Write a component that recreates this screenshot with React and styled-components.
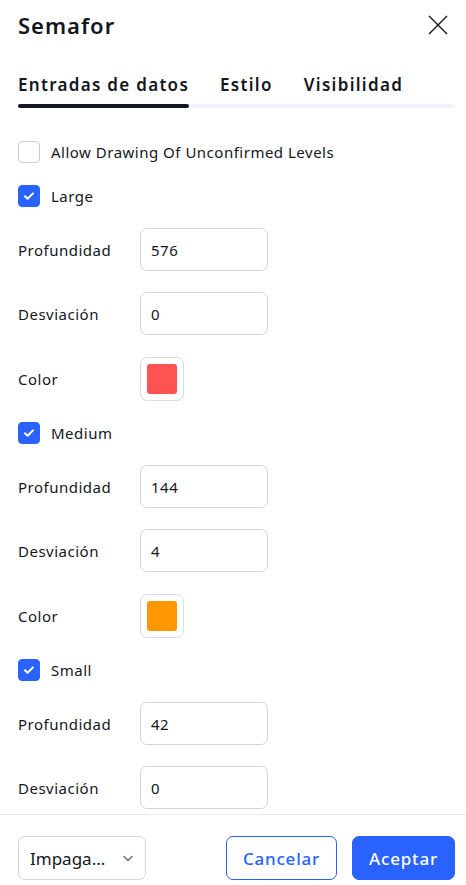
import styled, { createGlobalStyle } from "styled-components";

const GlobalStyle = createGlobalStyle`
    html, body {
        margin: 0;
        padding: 0;
        background: #ffffff;
    }
    * {
        box-sizing: border-box;
    }
`

const Dialog = styled.div`
    width: 466px;
    height: 885px;
    display: flex;
    flex-direction: column;
    background: #ffffff;
    color: #131722;
    font-family: "Noto Sans", "Open Sans", sans-serif;
    overflow: hidden;
`

const Header = styled.div`
    display: flex;
    align-items: center;
    justify-content: space-between;
    height: 50px;
    padding: 0 18px;

    h1 {
        margin: 0;
        font-size: 22px;
        font-weight: 600;
        letter-spacing: 1px;
    }
`

const CloseButton = styled.button`
    border: none;
    background: none;
    padding: 0;
    width: 24px;
    height: 24px;
    display: flex;
    align-items: center;
    justify-content: center;
    color: #131722;
    margin-right: -2px;
`

const Tabs = styled.div`
    display: flex;
    gap: 31px;
    margin: 23px 11px 0 18px;
    border-bottom: 4px solid #f0f3fa;
    border-radius: 2px;
`

const Tab = styled.div`
    position: relative;
    font-size: 17px;
    font-weight: 600;
    letter-spacing: 1.3px;
    padding-bottom: 8px;
    color: #131722;

    &::after {
        content: "";
        display: ${(p) => (p.active ? "block" : "none")};
        position: absolute;
        left: 0;
        right: 0;
        bottom: -4px;
        height: 4px;
        border-radius: 2px;
        background: #131722;
    }
`

const Content = styled.div`
    flex: 1;
    overflow: hidden;
    padding: 33px 18px 0 18px;
    display: flex;
    flex-direction: column;
    letter-spacing: 0.5px;
`

const CheckRow = styled.label`
    display: flex;
    align-items: center;
    gap: 11px;
    height: 22px;
    margin-bottom: ${(p) => p.gap}px;
    font-size: 15px;
`

const Box = styled.span`
    width: 22px;
    height: 22px;
    border-radius: 4px;
    display: flex;
    align-items: center;
    justify-content: center;
    background: ${(p) => (p.checked ? "#2962ff" : "#ffffff")};
    border: 1px solid ${(p) => (p.checked ? "#2962ff" : "#c9cbd2")};
`

const FieldRow = styled.div`
    display: flex;
    align-items: center;
    height: ${(p) => p.h}px;
    margin-bottom: ${(p) => p.gap}px;
    font-size: 15px;
`

const Label = styled.span`
    width: 122px;
`

const Input = styled.div`
    width: 128px;
    height: 43px;
    border: 1px solid #d1d4dc;
    border-radius: 7px;
    display: flex;
    align-items: center;
    padding-left: 10px;
    font-size: 15px;
`

const Swatch = styled.div`
    width: 44px;
    height: 44px;
    border: 1px solid #d9dbe0;
    border-radius: 7px;
    padding: 6px;

    div {
        width: 100%;
        height: 100%;
        border-radius: 3px;
        background: ${(p) => p.color};
    }
`

const Footer = styled.div`
    border-top: 1px solid #e6e8ee;
    height: 71px;
    padding: 21px 11px 0 18px;
    display: flex;
    align-items: flex-start;
`

const Select = styled.div`
    width: 128px;
    height: 44px;
    border: 1px solid #d1d4dc;
    border-radius: 7px;
    display: flex;
    align-items: center;
    justify-content: space-between;
    padding: 0 10px 0 11px;
    font-size: 17px;
    color: #131722;
`

const Button = styled.button`
    height: 44px;
    border-radius: 7px;
    font-family: inherit;
    font-size: 17px;
    font-weight: 500;
    letter-spacing: 0.8px;
    padding: 0;
    width: ${(p) => p.w}px;
    margin-left: ${(p) => p.ml};
    border: 1px solid #2962ff;
    color: ${(p) => (p.primary ? "#ffffff" : "#2962ff")};
    background: ${(p) => (p.primary ? "#2962ff" : "#ffffff")};
`

const Check = () => (
    <svg width="14" height="14" viewBox="0 0 14 14" fill="none">
        <path d="M3 7.3l2.6 2.5L11 4.4" stroke="#fff" strokeWidth="2" strokeLinecap="round" strokeLinejoin="round" />
    </svg>
)

const Checkbox = ({ checked, label, gap }) => (
    <CheckRow gap={gap}>
        <Box checked={checked}>{checked && <Check />}</Box>
        {label}
    </CheckRow>
)

const Field = ({ label, value, gap }) => (
    <FieldRow h={43} gap={gap}>
        <Label>{label}</Label>
        <Input>{value}</Input>
    </FieldRow>
)

const ColorField = ({ color, gap }) => (
    <FieldRow h={44} gap={gap}>
        <Label>Color</Label>
        <Swatch color={color}><div /></Swatch>
    </FieldRow>
)

const levels = [
    { name: "Large", depth: "576", dev: "0", color: "#ff5252" },
    { name: "Medium", depth: "144", dev: "4", color: "#ff9800" },
    { name: "Small", depth: "42", dev: "0", color: null },
]

const App = () => {
    return (
        <Dialog>
            <GlobalStyle />
            <Header>
                <h1>Semafor</h1>
                <CloseButton>
                    <svg width="20" height="20" viewBox="0 0 20 20">
                        <path d="M1 1l18 18M19 1L1 19" stroke="#131722" strokeWidth="1.4" />
                    </svg>
                </CloseButton>
            </Header>
            <Tabs>
                <Tab active>Entradas de datos</Tab>
                <Tab>Estilo</Tab>
                <Tab>Visibilidad</Tab>
            </Tabs>
            <Content>
                <Checkbox label="Allow Drawing Of Unconfirmed Levels" gap={22} />
                {levels.map((l) => (
                    <div key={l.name}>
                        <Checkbox checked label={l.name} gap={21} />
                        <Field label="Profundidad" value={l.depth} gap={21} />
                        <Field label="Desviación" value={l.dev} gap={22} />
                        {l.color && <ColorField color={l.color} gap={21} />}
                    </div>
                ))}
            </Content>
            <Footer>
                <Select>
                    Impaga...
                    <svg width="14" height="14" viewBox="0 0 14 14" fill="none">
                        <path d="M3 5.5l4 4 4-4" stroke="#6a6d78" strokeWidth="1.5" strokeLinecap="round" strokeLinejoin="round" />
                    </svg>
                </Select>
                <Button w={111} ml="auto">Cancelar</Button>
                <Button primary w={103} ml="15px">Aceptar</Button>
            </Footer>
        </Dialog>
    )
}
export default App;
